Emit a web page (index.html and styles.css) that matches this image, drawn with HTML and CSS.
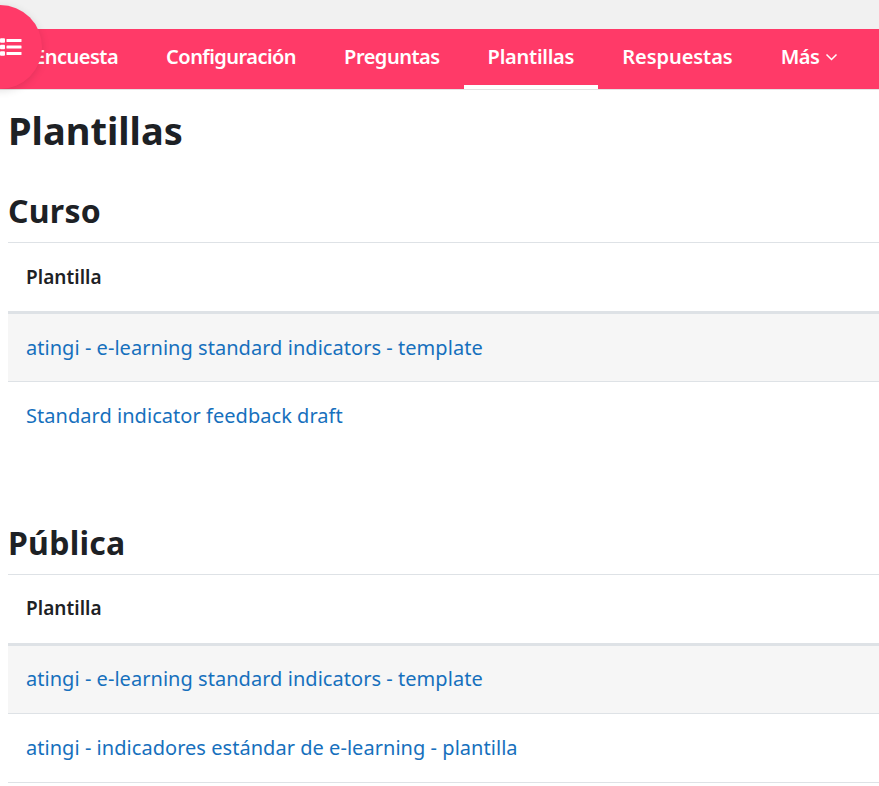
FILE: index.html
```html
<!DOCTYPE html>
<html lang="es">
<head>
<meta charset="utf-8">
<title>Plantillas</title>
<link rel="stylesheet" href="styles.css">
</head>
<body>
<div class="topband"></div>
<nav class="tabs">
  <a class="tab" href="#">Encuesta</a>
  <a class="tab tight" href="#">Configuración</a>
  <a class="tab" href="#">Preguntas</a>
  <a class="tab active" href="#">Plantillas</a>
  <a class="tab wide" href="#">Respuestas</a>
  <a class="tab" href="#">Más
    <svg class="chev" width="13" height="8" viewBox="0 0 13 8"><path d="M1.500 1.500 6.500 6.500 11.500 1.500" fill="none" stroke="#fff" stroke-width="1.500"/></svg>
  </a>
</nav>
<button class="fab" aria-label="Índice">
  <svg width="22" height="18" viewBox="0 0 22 18" fill="#fff">
    <rect x="0" y="0.300" width="5" height="4.500" rx="1"/><rect x="6.500" y="1" width="15" height="3" rx="0.500"/>
    <rect x="0" y="6.800" width="5" height="4.500" rx="1"/><rect x="6.500" y="7.500" width="15" height="3" rx="0.500"/>
    <rect x="0" y="13.300" width="5" height="4.500" rx="1"/><rect x="6.500" y="14" width="15" height="3" rx="0.500"/>
  </svg>
</button>
<main class="content">
  <h1>Plantillas</h1>
  <h2>Curso</h2>
  <table class="list">
    <thead><tr><th>Plantilla</th></tr></thead>
    <tbody>
      <tr class="odd"><td><a href="#">atingi - e-learning standard indicators - template</a></td></tr>
      <tr class="last-plain"><td><a href="#">Standard indicator feedback draft</a></td></tr>
    </tbody>
  </table>
  <h2>Pública</h2>
  <table class="list">
    <thead><tr><th>Plantilla</th></tr></thead>
    <tbody>
      <tr class="odd"><td><a href="#">atingi - e-learning standard indicators - template</a></td></tr>
      <tr><td><a href="#">atingi - indicadores estándar de e-learning - plantilla</a></td></tr>
    </tbody>
  </table>
</main>
</body>
</html>
```
FILE: styles.css
```css
* { box-sizing: border-box; }
html, body { margin: 0; padding: 0; }
body {
  background: #fff;
  color: #1d2125;
  font-family: "Noto Sans", "Open Sans", sans-serif;
  overflow: hidden;
  height: 786px;
}
.topband { height: 29px; background: #f1f1f1; }
.tabs {
  display: flex;
  height: 61px;
  padding-left: 10px;
  background: #ff3a68;
  border-bottom: 1px solid #e3e3e3;
}
.tab {
  display: flex;
  align-items: center;
  height: 60px;
  padding: 0 24px 6px;
  color: #fff;
  font-size: 20px;
  font-weight: 600;
  letter-spacing: -0.5px;
  text-decoration: none;
  white-space: nowrap;
}
.tab.tight { letter-spacing: -0.54px; }
.tab.active { letter-spacing: -0.25px; box-shadow: inset 0 -4px 0 #fff; }
.tab.wide { letter-spacing: -0.05px; }
.chev { margin-left: 6px; margin-top: 2px; }
.fab {
  position: absolute;
  left: -42px;
  top: 5px;
  width: 84px;
  height: 84px;
  padding: 0 0 0 42px;
  display: flex;
  align-items: flex-start;
  border: 0;
  border-radius: 50%;
  background: #ff3a68;
  box-shadow: 0 2px 8px rgba(0,0,0,.12);
}
.fab svg { margin-top: 33px; }
.content { padding: 0 0 0 8px; }
h1 {
  margin: 0;
  padding-top: 17px;
  height: 65px;
  font-size: 38px;
  line-height: 46px;
  font-weight: 700;
}
h2 {
  margin: 0;
  height: 87px;
  padding: 36px 0 12px;
  font-size: 32px;
  line-height: 39px;
  font-weight: 700;
  letter-spacing: 0.25px;
}
.list {
  width: 871px;
  border-collapse: collapse;
  font-size: 20px;
  margin-bottom: 36px;
}
.list th, .list td {
  padding: 0 18px;
  text-align: left;
  height: 69px;
  border-top: 1px solid #dee2e6;
}
.list th {
  height: 70px;
  font-size: 19px;
  font-weight: 600;
  letter-spacing: 0.05px;
  border-bottom: 3px solid #dee2e6;
  padding-bottom: 1px;
}
.list thead + tbody tr:first-child td { border-top: 0; }
.list td { border-bottom: 1px solid #dee2e6; letter-spacing: 0.04px; padding-bottom: 1px; }
.list .odd td { background: #f6f6f6; }
.list .last-plain td { border-bottom: 0; }
.list a { color: #1670bd; text-decoration: none; }
```
